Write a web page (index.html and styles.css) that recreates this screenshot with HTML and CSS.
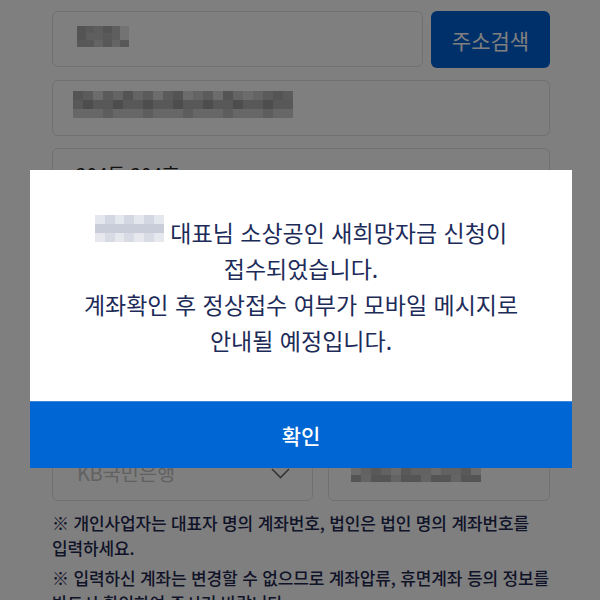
FILE: index.html
```html
<!DOCTYPE html>
<html lang="ko">
<head>
<meta charset="utf-8">
<title>소상공인 새희망자금 신청</title>
<link rel="stylesheet" href="styles.css">
</head>
<body>
<div class="page">
  <div class="row">
    <div class="field grow">
      <span class="mosaic m-zip"><i></i><i></i><i></i><i></i><i></i><i></i><i></i><i></i><i></i><i></i><i></i><i></i><i></i><i></i><i></i><i></i><i></i><i></i></span>
    </div>
    <button class="search-btn">주소검색</button>
  </div>
  <div class="field">
    <span class="mosaic m-addr"><i></i><i></i><i></i><i></i><i></i><i></i><i></i><i></i><i></i><i></i><i></i><i></i><i></i><i></i><i></i><i></i><i></i><i></i><i></i><i></i><i></i><i></i><i></i><i></i><i></i><i></i><i></i><i></i><i></i><i></i><i></i><i></i><i></i><i></i><i></i><i></i><i></i><i></i><i></i><i></i><i></i><i></i><i></i><i></i><i></i><i></i><i></i><i></i><i></i><i></i><i></i><i></i><i></i><i></i><i></i><i></i><i></i><i></i><i></i><i></i><i></i><i></i><i></i><i></i><i></i><i></i></span>
  </div>
  <div class="field">
    <span class="value">204동 204호</span>
  </div>
  <div class="hidden-block">
    <p class="label">입금계좌 정보</p>
    <div class="field"><span class="value">상호명</span></div>
  </div>
  <div class="row bank-row">
    <div class="field select">
      <span class="placeholder">KB국민은행</span>
      <svg class="chevron" width="19" height="11" viewBox="0 0 19 11"><polyline points="1,1 9.5,9.5 18,1" fill="none" stroke="#6a6a6a" stroke-width="1.6"/></svg>
    </div>
    <div class="field account">
      <span class="mosaic m-acct"><i></i><i></i><i></i><i></i><i></i><i></i><i></i><i></i><i></i><i></i><i></i><i></i><i></i><i></i><i></i><i></i><i></i><i></i><i></i><i></i><i></i><i></i><i></i><i></i><i></i><i></i></span>
    </div>
  </div>
  <p class="note">※ 개인사업자는 대표자 명의 계좌번호, 법인은 법인 명의 계좌번호를 입력하세요.</p>
  <p class="note">※ 입력하신 계좌는 변경할 수 없으므로 계좌압류, 휴면계좌 등의 정보를 반드시 확인하여 주시기 바랍니다.</p>
</div>

<div class="overlay"></div>
<div class="modal" role="dialog">
  <div class="modal-body">
    <p><span class="mosaic m-name"><i></i><i></i><i></i><i></i><i></i><i></i><i></i><i></i><i></i><i></i><i></i><i></i><i></i><i></i><i></i><i></i><i></i><i></i><i></i><i></i><i></i></span> 대표님 소상공인 새희망자금 신청이<br>접수되었습니다.<br>계좌확인 후 정상접수 여부가 모바일 메시지로<br>안내될 예정입니다.</p>
  </div>
  <button class="modal-btn">확인</button>
</div>
</body>
</html>
```
FILE: styles.css
```css
* { box-sizing: border-box; }
html, body { margin: 0; padding: 0; }
body {
  background: #ffffff;
  font-family: "Noto Sans CJK KR", "Noto Sans", sans-serif;
  color: #222;
  height: 600px;
  overflow: hidden;
}
.page {
  padding: 11px 50px 0 52px;
}
.row {
  display: flex;
  gap: 8px;
}
.field {
  height: 56px;
  border: 1px solid #e0e0e0;
  border-radius: 6px;
  background: #fff;
  display: flex;
  align-items: center;
  padding: 0 22px 0 23px;
  margin-top: 12px;
}
.row .field { margin-top: 0; }
.grow { flex: 1; }
.search-btn {
  width: 119px;
  height: 57px;
  border: 0;
  border-radius: 6px;
  background: #0060d2;
  color: #fff;
  font-family: inherit;
  font-size: 21px;
  letter-spacing: 0;
  padding: 0;
}
.value {
  font-size: 19px;
  color: #222;
  position: relative;
  top: -3px;
}
.hidden-block {
  height: 229px;
  overflow: hidden;
}
.label { margin: 20px 0 0; font-size: 17px; }
.bank-row {
  margin-top: 12px;
  gap: 15px;
}
.select {
  width: 261px;
  justify-content: space-between;
  padding: 0 22px 0 24px;
}
.placeholder {
  font-size: 20px;
  color: #c2c2c2;
  letter-spacing: -0.3px;
  position: relative;
  top: -1px;
}
.chevron { position: relative; top: 0; }
.account { flex: 1; padding-left: 22px; }

.note {
  margin: 9px 0 0;
  font-size: 17px;
  line-height: 25px;
  letter-spacing: -0.15px;
  font-weight: 500;
  color: #1f2850;
  word-break: keep-all;
}
.note + .note { margin-top: 5px; }

/* mosaic (pixelated redaction) */
.mosaic { display: inline-grid; }
.mosaic i { display: block; background: #c8c8c8; }
.m-zip {
  grid-template-columns: repeat(6, 8.7px);
  grid-template-rows: repeat(3, 7px);
  margin-left: 1px;
  margin-top: -5px;
}
.m-zip i { background: #bdbdbd; }
.m-zip i:nth-child(3n+1) { background: #a9a9a9; }
.m-zip i:nth-child(4n+2) { background: #b3b3b3; }
.m-zip i:nth-child(6n) { background: #e6e6e6; }
.m-zip i:nth-child(n+13) { background: #b0b0b0; }
.m-zip i:nth-child(15), .m-zip i:nth-child(17) { background: #c8c8c8; }

.m-addr {
  grid-template-columns: repeat(22, 10px);
  grid-template-rows: repeat(3, 9px);
  margin-left: -3px;
  margin-top: -8px;
}
.m-addr i { background: #c9c9c9; }
.m-addr i:nth-child(2n) { background: #b6b6b6; }
.m-addr i:nth-child(3n) { background: #d8d8d8; }
.m-addr i:nth-child(5n+1) { background: #a8a8a8; }
.m-addr i:nth-child(n+23):nth-child(-n+44) { background: #b1b1b1; }
.m-addr i:nth-child(n+23):nth-child(-n+44):nth-child(3n) { background: #9a9a9a; }
.m-addr i:nth-child(n+45) { background: #cfcfcf; }
.m-addr i:nth-child(n+45):nth-child(4n) { background: #bbbbbb; }

.m-acct {
  grid-template-columns: repeat(13, 10px);
  grid-template-rows: repeat(2, 7px);
  margin-left: 0;
  margin-top: 4px;
}
.m-acct i { background: #c4c4c4; }
.m-acct i:nth-child(3n) { background: #b2b2b2; }
.m-acct i:nth-child(4n+1) { background: #d6d6d6; }
.m-acct i:nth-child(n+14) { background: #aaaaaa; }
.m-acct i:nth-child(n+14):nth-child(3n) { background: #c9c9c9; }

/* overlay + modal */
.overlay {
  position: fixed;
  inset: 0;
  background: rgba(0, 0, 0, 0.5);
}
.modal {
  position: fixed;
  top: 170px;
  left: 30px;
  width: 542px;
  background: #fff;
  display: flex;
  flex-direction: column;
}
.modal-body {
  padding: 44px 10px 43px;
  text-align: center;
}
.modal-body p {
  margin: 0;
  font-size: 23px;
  line-height: 36px;
  letter-spacing: 0;
  color: #1d2b59;
}
.m-name {
  grid-template-columns: repeat(7, 9.86px);
  grid-template-rows: repeat(3, 9px);
  vertical-align: top;
  margin-top: 1px;
}
.m-name i { background: #dfe2ea; }
.m-name i:nth-child(-n+7) { background: #e4e7ee; }
.m-name i:nth-child(2), .m-name i:nth-child(4), .m-name i:nth-child(6) { background: #d3d7e1; }
.m-name i:nth-child(n+8):nth-child(-n+14) { background: #c9cdd9; }
.m-name i:nth-child(9), .m-name i:nth-child(11) { background: #bfc4d3; }
.m-name i:nth-child(13) { background: #b1b6c8; }
.m-name i:nth-child(8) { background: #dde0e8; }
.m-name i:nth-child(n+15) { background: #e6e8ee; }
.m-name i:nth-child(16), .m-name i:nth-child(18), .m-name i:nth-child(20) { background: #d8dbe4; }

.modal-btn {
  height: 67px;
  border: 0;
  border-top: 1px solid #3a86e0;
  background: #0066d3;
  color: #fff;
  font-family: inherit;
  font-size: 21px;
  font-weight: 500;
  padding: 0;
}
```
